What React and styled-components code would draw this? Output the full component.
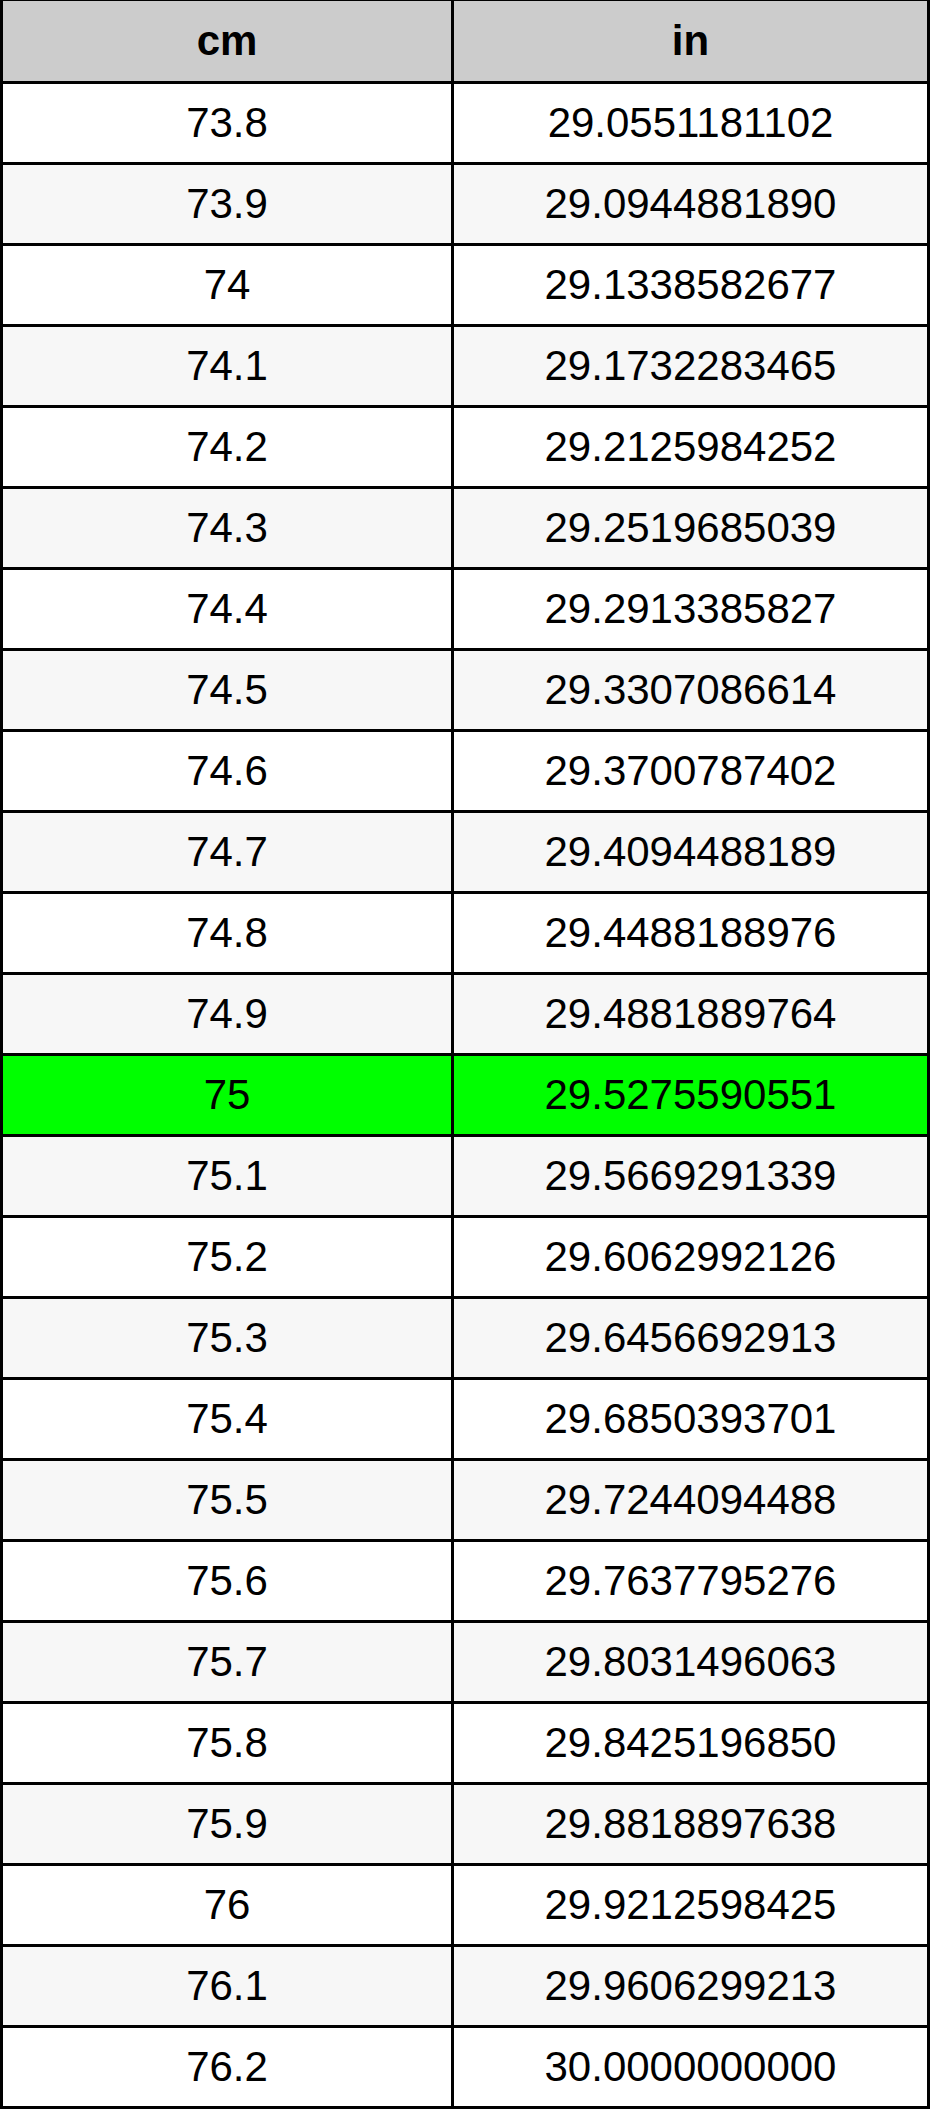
import React from 'react'
import styled, { createGlobalStyle } from 'styled-components'

const ROWS = [
  ['73.8', '29.0551181102'],
  ['73.9', '29.0944881890'],
  ['74', '29.1338582677'],
  ['74.1', '29.1732283465'],
  ['74.2', '29.2125984252'],
  ['74.3', '29.2519685039'],
  ['74.4', '29.2913385827'],
  ['74.5', '29.3307086614'],
  ['74.6', '29.3700787402'],
  ['74.7', '29.4094488189'],
  ['74.8', '29.4488188976'],
  ['74.9', '29.4881889764'],
  ['75', '29.5275590551'],
  ['75.1', '29.5669291339'],
  ['75.2', '29.6062992126'],
  ['75.3', '29.6456692913'],
  ['75.4', '29.6850393701'],
  ['75.5', '29.7244094488'],
  ['75.6', '29.7637795276'],
  ['75.7', '29.8031496063'],
  ['75.8', '29.8425196850'],
  ['75.9', '29.8818897638'],
  ['76', '29.9212598425'],
  ['76.1', '29.9606299213'],
  ['76.2', '30.0000000000'],
]

const HIGHLIGHT = '75'

const GlobalStyle = createGlobalStyle`
  html, body {
    margin: 0;
    padding: 0;
    background: #ffffff;
  }
  body {
    font-family: 'Liberation Sans', Arial, Helvetica, sans-serif;
  }
`

const Table = styled.table`
  border-collapse: separate;
  border-spacing: 0;
  font-family: 'Liberation Sans', Arial, Helvetica, sans-serif;
  font-size: 42px;
  color: #000000;
`

const HeadCell = styled.th`
  width: ${(p) => p.$width}px;
  padding: 0;
  line-height: 80px;
  background: #cccccc;
  font-weight: bold;
  text-align: center;
  border-top: 1px solid #000;
  border-bottom: 3px solid #000;
  border-right: 3px solid #000;
  &:first-child {
    border-left: 3px solid #000;
  }
`

const Row = styled.tr`
  background: ${(p) => (p.$active ? '#00ff00' : p.$alt ? '#f7f7f7' : '#ffffff')};
`

const Cell = styled.td`
  padding: 0;
  line-height: 78px;
  text-align: center;
  white-space: nowrap;
  border-bottom: 3px solid #000;
  border-right: 3px solid #000;
  &:first-child {
    border-left: 3px solid #000;
  }
`

const App = () => {
  return (
    <>
      <GlobalStyle />
      <Table>
        <thead>
          <tr>
            <HeadCell $width={448}>cm</HeadCell>
            <HeadCell $width={473}>in</HeadCell>
          </tr>
        </thead>
        <tbody>
          {ROWS.map(([cm, inch], i) => (
            <Row key={cm} $alt={i % 2 === 1} $active={cm === HIGHLIGHT}>
              <Cell>{cm}</Cell>
              <Cell>{inch}</Cell>
            </Row>
          ))}
        </tbody>
      </Table>
    </>
  )
}

export default App
